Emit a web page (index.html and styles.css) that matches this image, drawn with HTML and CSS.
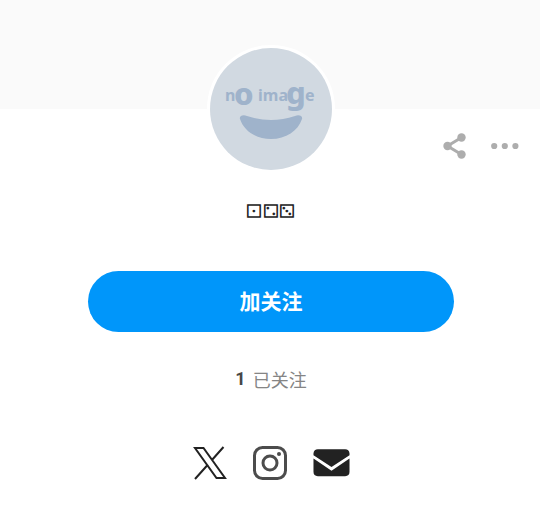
FILE: index.html
```html
<!DOCTYPE html>
<html lang="zh-CN">
<head>
<meta charset="utf-8">
<meta name="viewport" content="width=device-width, initial-scale=1">
<title>⚀⚁⚂</title>
<link rel="stylesheet" href="styles.css">
</head>
<body>
<div class="cover"></div>
<main class="profile">
  <header class="profile-head">
    <svg class="avatar" viewBox="0 0 122 122" role="img" aria-label="no image">
      <rect width="122" height="122" fill="#d1d9e1"/>
      <g class="avatar-text" fill="#9fb3cb">
        <text x="15" y="53" font-size="16">n</text>
        <text class="heavy" x="24" y="57" font-size="31">o</text>
        <text x="48" y="53" font-size="16">ima</text>
        <text class="heavy" x="76" y="56" font-size="31">g</text>
        <text x="95" y="53" font-size="16">e</text>
      </g>
      <path d="M30 71C29 68 33 66 37 68Q61 76 85 68C89 66 93 68 92 71C88 83 76 91 61 91S34 83 30 71Z" fill="#9fb3cb"/>
    </svg>
    <div class="actions">
      <button class="icon-button" type="button" aria-label="分享">
        <svg width="28" height="28" viewBox="0 0 28 28" fill="#adadad">
          <path d="M20.500 5.500 6.500 14l14 8.500" fill="none" stroke="#adadad" stroke-width="3"/>
          <circle cx="20.500" cy="5.500" r="4.200"/><circle cx="6.500" cy="14" r="4.200"/><circle cx="20.500" cy="22.500" r="4.200"/>
        </svg>
      </button>
      <button class="icon-button" type="button" aria-label="更多">
        <svg width="28" height="28" viewBox="0 0 28 28" fill="#adadad">
          <circle cx="3.200" cy="14" r="3.100"/><circle cx="13.800" cy="14" r="3.100"/><circle cx="24.400" cy="14" r="3.100"/>
        </svg>
      </button>
    </div>
  </header>
  <h1 class="name"><span>⚀</span><span>⚁</span><span>⚂</span></h1>
  <button class="follow" type="button">加关注</button>
  <a class="following" href="#following"><strong class="count">1</strong>已关注</a>
  <nav class="social">
    <a href="#x" aria-label="X">
      <svg width="34" height="34" viewBox="0 0 34 34" fill="none" stroke="#222" stroke-width="2">
        <path d="M2 2h8.500L32 32h-8.500ZM30.500 1 18.500 14.500M15 18.500 2 33"/>
      </svg>
    </a>
    <a href="#instagram" aria-label="Instagram">
      <svg width="34" height="34" viewBox="0 0 34 34" fill="none" stroke="#4c4c4c" stroke-width="3">
        <rect x="1.500" y="1.500" width="31" height="31" rx="8"/><circle cx="17" cy="17" r="7"/>
        <circle cx="26" cy="8" r="2" fill="#4c4c4c" stroke="none"/>
      </svg>
    </a>
    <a href="#mail" aria-label="邮件">
      <svg width="37" height="34" viewBox="0 0 38 34" fill="#222">
        <path d="M5 3h28q4 0 4.500 4v2L19 21 .5 9V7Q1 3 5 3ZM.5 12.500 19 25l18.500-12.500V26q0 4.500-4.500 4.500H5Q.5 30.500.5 26Z"/>
      </svg>
    </a>
  </nav>
</main>
</body>
</html>
```

FILE: styles.css
```css
* {
  box-sizing: border-box;
}

body {
  margin: 0;
  background: #fff;
  color: #222;
  font-family: "Noto Sans", "Noto Sans CJK SC", sans-serif;
}

button {
  border: 0;
  padding: 0;
  cursor: pointer;
}

svg {
  display: block;
}

.cover {
  height: 109px;
  background: #fafafa;
}

.profile {
  display: flex;
  flex-direction: column;
  align-items: center;
  margin-top: -64px;
  padding-left: 2px;
}

.profile-head {
  display: grid;
  grid-template-columns: 1fr auto 1fr;
  align-self: stretch;
}

.avatar {
  grid-column: 2;
  width: 128px;
  height: 128px;
  border: 3px solid #fff;
  border-radius: 50%;
  background: #fff;
}

.avatar-text {
  font-family: "Noto Sans", sans-serif;
  font-weight: 700;
}

.heavy {
  font-weight: 800;
}

.actions {
  display: flex;
  gap: 22px;
  justify-self: end;
  align-self: end;
  padding: 0 21px 13px 0;
}

.icon-button {
  background: none;
}

.name {
  display: flex;
  margin: 24px 0 0;
  font: 400 19px/28px "DejaVu Sans", sans-serif;
}

/* Pips run from the top left to the bottom right */
.name span {
  transform: rotate(90deg);
}

.follow {
  width: calc(100% - 172px);
  height: 61px;
  margin-top: 46px;
  padding-bottom: 4px;
  border-radius: 31px;
  background: #0096fa;
  color: #fff;
  font: 700 21px/28px "Noto Sans CJK SC", sans-serif;
}

.following {
  display: flex;
  gap: 7px;
  margin-top: 33px;
  color: #858585;
  font: 400 18px/28px "Noto Sans CJK SC", sans-serif;
  text-decoration: none;
}

.count {
  color: #474747;
  font-family: Roboto, sans-serif;
  font-weight: 700;
}

.social {
  display: flex;
  gap: 26px;
  margin-top: 53px;
}
```
